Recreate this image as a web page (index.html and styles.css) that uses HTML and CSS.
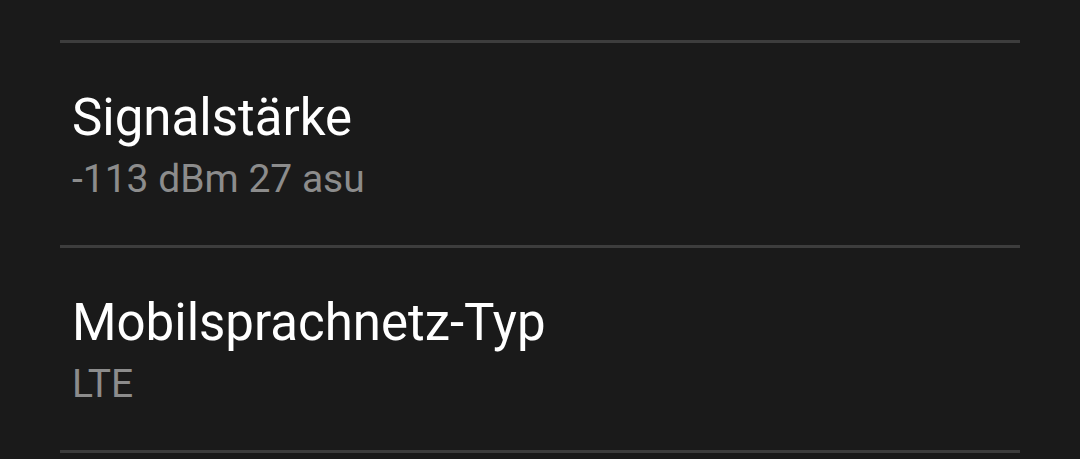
FILE: index.html
```html
<!DOCTYPE html>
<html lang="de">
<head>
    <meta charset="UTF-8">
    <title>Status</title>
    <link rel="stylesheet" href="styles.css">
</head>
<body>
    <div class="list">
        <div class="divider"></div>
        <div class="item">
            <div class="title">Signalstärke</div>
            <div class="summary">-113 dBm 27 asu</div>
        </div>
        <div class="divider"></div>
        <div class="item">
            <div class="title">Mobilsprachnetz-Typ</div>
            <div class="summary">LTE</div>
        </div>
        <div class="divider"></div>
    </div>
</body>
</html>
```
FILE: styles.css
```css
body {
    margin: 0;
    background-color: #1a1a1a;
    font-family: Roboto, "Liberation Sans", sans-serif;
}
.list {
    padding: 40px 60px 0 60px;
}
.divider {
    height: 3px;
    background-color: #3d3d3d;
}
.item {
    padding: 42px 12px 0 12px;
    height: 160px;
}
.title {
    color: #ffffff;
    font-size: 51px;
    line-height: 66px;
}
.summary {
    color: #8c8c8c;
    font-size: 39px;
    line-height: 56px;
}
```
